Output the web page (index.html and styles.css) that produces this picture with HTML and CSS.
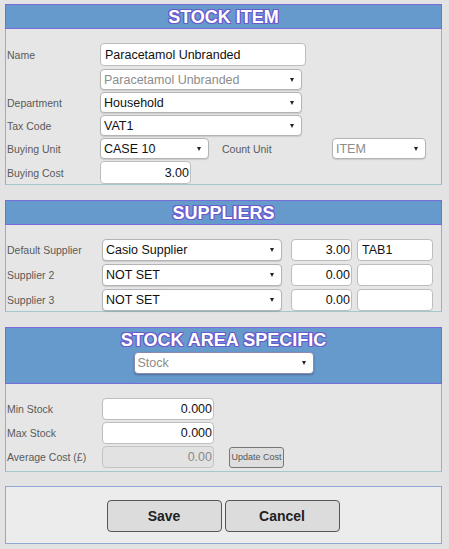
FILE: index.html
```html
<!DOCTYPE html>
<html>
<head>
<meta charset="utf-8">
<link rel="stylesheet" href="styles.css">
</head>
<body>
<div class="page">
  <section class="panel">
    <div class="head"><h2>STOCK ITEM</h2></div>
    <div class="body body-item">
      <div class="row row-name">
        <label>Name</label>
        <input class="txt w-name" value="Paracetamol Unbranded">
      </div>
      <div class="row">
        <label></label>
        <span class="sel w-main muted"><select><option>Paracetamol Unbranded</option></select></span>
      </div>
      <div class="row">
        <label>Department</label>
        <span class="sel w-main"><select><option>Household</option></select></span>
      </div>
      <div class="row">
        <label>Tax Code</label>
        <span class="sel w-main"><select><option>VAT1</option></select></span>
      </div>
      <div class="row">
        <label>Buying Unit</label>
        <span class="sel w-unit"><select><option>CASE 10</option></select></span>
        <label class="lbl-count">Count Unit</label>
        <span class="sel w-count muted"><select disabled><option>ITEM</option></select></span>
      </div>
      <div class="row">
        <label>Buying Cost</label>
        <input class="txt num w-cost" value="3.00">
      </div>
    </div>
  </section>

  <section class="panel">
    <div class="head"><h2>SUPPLIERS</h2></div>
    <div class="body body-sup">
      <div class="row">
        <label class="lbl-wide">Default Supplier</label>
        <span class="sel w-sup"><select><option>Casio Supplier</option></select></span>
        <input class="txt num w-scost" value="3.00">
        <input class="txt w-code" value="TAB1">
      </div>
      <div class="row">
        <label class="lbl-wide">Supplier 2</label>
        <span class="sel w-sup"><select><option>NOT SET</option></select></span>
        <input class="txt num w-scost" value="0.00">
        <input class="txt w-code" value="">
      </div>
      <div class="row">
        <label class="lbl-wide">Supplier 3</label>
        <span class="sel w-sup"><select><option>NOT SET</option></select></span>
        <input class="txt num w-scost" value="0.00">
        <input class="txt w-code" value="">
      </div>
    </div>
  </section>

  <section class="panel">
    <div class="head head-area">
      <h2>STOCK AREA SPECIFIC</h2>
      <span class="sel w-area muted"><select><option>Stock</option></select></span>
    </div>
    <div class="body body-area">
      <div class="row">
        <label class="lbl-wide">Min Stock</label>
        <input class="txt num w-stock" value="0.000">
      </div>
      <div class="row">
        <label class="lbl-wide">Max Stock</label>
        <input class="txt num w-stock" value="0.000">
      </div>
      <div class="row">
        <label class="lbl-wide">Average Cost (£)</label>
        <input class="txt num w-stock dis" value="0.00" disabled>
        <button class="btn-small">Update Cost</button>
      </div>
    </div>
  </section>

  <section class="actions">
    <button class="btn">Save</button>
    <button class="btn">Cancel</button>
  </section>
</div>
</body>
</html>
```

FILE: styles.css
```css
* { box-sizing: border-box; }
html, body {
  margin: 0;
  padding: 0;
  background: #e3e3e3;
  font-family: "Liberation Sans", Arial, sans-serif;
}
.page {
  width: 449px;
  height: 549px;
  padding: 4px 8px 0 5px;
}
.panel {
  width: 437px;
  margin-bottom: 15px;
}
.head {
  height: 25px;
  background: #6699cc;
  border: 1px solid #7a6cd8;
  display: flex;
  align-items: center;
  justify-content: center;
}
.head h2 {
  margin: 0;
  font-size: 18px;
  font-weight: bold;
  color: #ffffff;
  letter-spacing: 0;
  text-shadow:
    1px 0 #6a5acd, -1px 0 #6a5acd, 0 1px #6a5acd, 0 -1px #6a5acd,
    1px 1px #6a5acd, -1px -1px #6a5acd, 1px -1px #6a5acd, -1px 1px #6a5acd;
  line-height: 20px;
}
.head-area {
  height: 57px;
  flex-direction: column;
  justify-content: flex-start;
  padding-top: 2px;
}
.head-area h2 { margin-bottom: 0; }
.body {
  background: #e6e6e6;
  border-left: 1px solid #a4a4dc;
  border-right: 1px solid #a4a4dc;
  border-bottom: 1px solid #a6c8cc;
  display: flex;
  flex-direction: column;
}
.body-item { padding: 14px 0 0 0; gap: 2px; }
.body-item .row-name { margin-bottom: 1px; }
.body-sup { padding: 14px 0 0 0; gap: 3px; height: 87px; }
.body-area { padding: 14px 0 0 0; gap: 2px; height: 88px; }

.row {
  display: flex;
  align-items: center;
}
.row label {
  width: 94px;
  flex: none;
  padding-left: 1px;
  font-size: 10.5px;
  color: #5a5a5a;
}
.row label.lbl-wide { width: 96px; }
.row label.lbl-count { width: 123px; padding-left: 13px; }

.txt {
  height: 23px;
  border: 1px solid #bdbdbd;
  border-radius: 4px;
  background: #ffffff;
  font-family: "Liberation Sans", Arial, sans-serif;
  font-size: 12.5px;
  color: #111;
  padding: 0 4px;
  outline: none;
  flex: none;
}
.num { text-align: right; padding-right: 1px; }
.dis { background: #e2e2e2; color: #8a8a8a; border-color: #c4c4c4; }

.sel {
  position: relative;
  display: inline-block;
  flex: none;
  height: 21px;
}
.sel select {
  -webkit-appearance: none;
  appearance: none;
  width: 100%;
  height: 100%;
  border: 1px solid #b4b4b4;
  border-radius: 4px;
  background: #ffffff;
  box-shadow: 0 1px 1px rgba(0,0,0,0.12);
  font-family: "Liberation Sans", Arial, sans-serif;
  font-size: 12.5px;
  color: #111;
  padding: 0 14px 0 3px;
  outline: none;
  opacity: 1;
}
.sel.muted select { color: #8c8c8c; }
.sel::after {
  content: "";
  position: absolute;
  right: 8px;
  top: 9px;
  border-left: 2.5px solid transparent;
  border-right: 2.5px solid transparent;
  border-top: 4px solid #222;
  pointer-events: none;
}

.w-name { width: 206px; }
.w-main { width: 202px; }
.w-unit { width: 109px; }
.w-count { width: 94px; }
.w-cost { width: 91px; }
.w-sup { width: 180px; height: 22px; }
.w-scost { width: 61px; height: 22px; margin-left: 9px; }
.w-code { width: 76px; height: 22px; margin-left: 5px; }
.w-area { width: 180px; height: 22px; margin-top: 2px; }
.w-area select { border-color: #8a8ab0; box-shadow: 0 1px 2px rgba(0,0,0,0.3); }
.w-stock { width: 112px; height: 22px; }

.btn-small {
  margin-left: 15px;
  width: 55px;
  height: 21px;
  padding: 0;
  border: 1px solid #777;
  border-radius: 3px;
  background: #dedede;
  font-family: "Liberation Sans", Arial, sans-serif;
  font-size: 9px;
  color: #555;
}

.actions {
  width: 437px;
  height: 58px;
  margin-top: -1px;
  background: #ececec;
  border: 1px solid #92a6d8;
  display: flex;
  justify-content: center;
  align-items: flex-start;
  gap: 3px;
  padding-top: 13px;
  padding-right: 1px;
}
.btn {
  width: 115px;
  height: 32px;
  border: 1px solid #555;
  border-radius: 4px;
  background: #dcdcdc;
  font-family: "Liberation Sans", Arial, sans-serif;
  font-size: 14px;
  font-weight: bold;
  color: #222;
}
```
